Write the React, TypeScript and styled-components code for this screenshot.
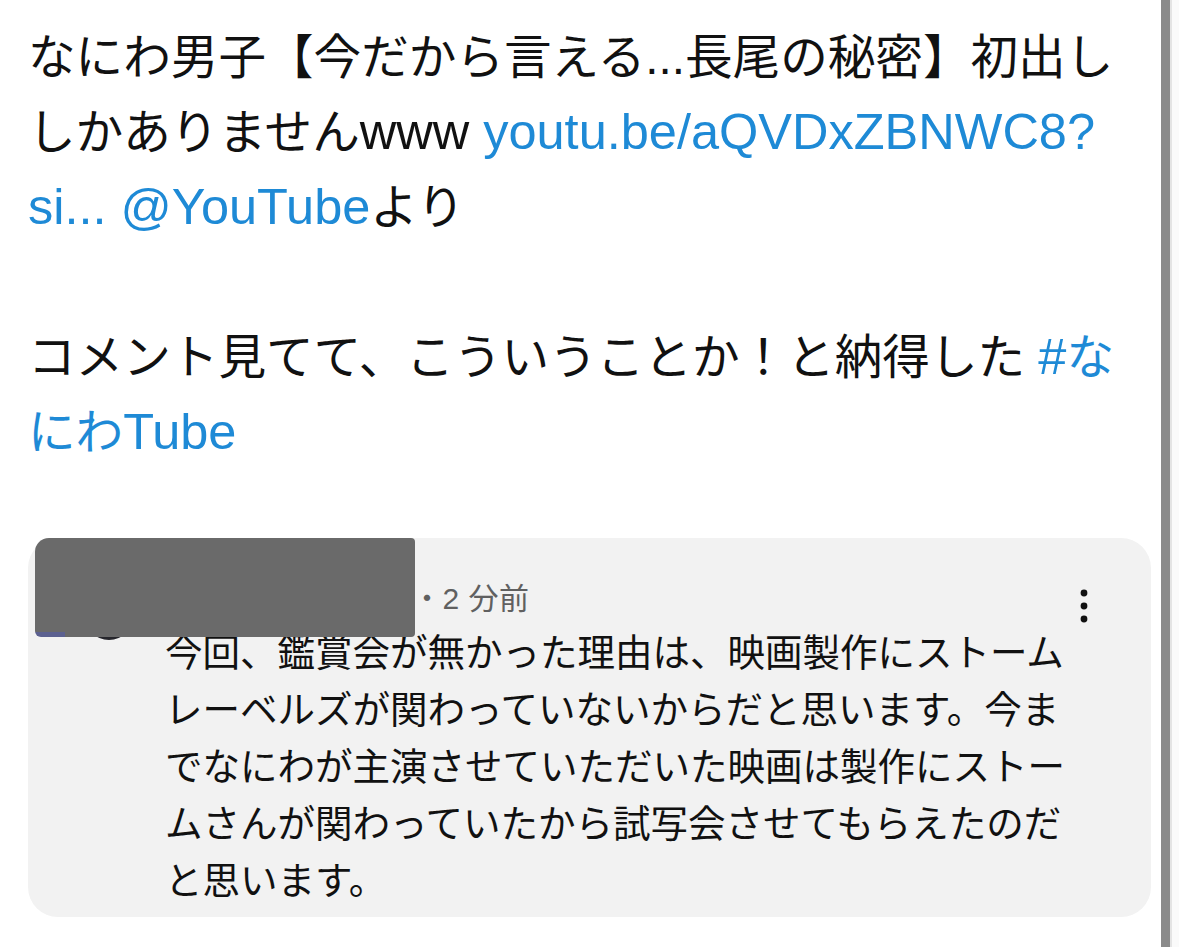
import styled, { createGlobalStyle } from 'styled-components';

const GlobalStyle = createGlobalStyle`
  html, body {
    margin: 0;
    padding: 0;
    background: #ffffff;
  }
  body {
    font-family: 'Liberation Sans', 'Noto Sans CJK JP', sans-serif;
  }
`;

const commentLines = [
  '今回、鑑賞会が無かった理由は、映画製作にストーム',
  'レーベルズが関わっていないからだと思います。今ま',
  'でなにわが主演させていただいた映画は製作にストー',
  'ムさんが関わっていたから試写会させてもらえたのだ',
  'と思います。',
];

function App() {
  return (
    <>
      <GlobalStyle />
      <Screen>
        <Content>
          <TweetText>
            なにわ男子【今だから言える...長尾の秘密】初出し
            <br />
            しかありません<Latin>www </Latin>
            <Link>
              <Latin>youtu.be/aQVDxZBNWC8?</Latin>
            </Link>
            <br />
            <Link>
              <Latin>si...</Latin>
            </Link>
            <Latin> </Latin>
            <Link>
              <Latin>@YouTube</Latin>
            </Link>
            より
            <br />
            <br />
            コメント見てて、こういうことか！と納得した{' '}
            <Link>
              <Latin>#</Latin>な
            </Link>
            <br />
            <Link>
              にわ<Latin>Tube</Latin>
            </Link>
          </TweetText>

          <CommentCard>
            <Avatar />
            <Redacted />
            <CommentHeader>
              <Meta>・2 分前</Meta>
              <MenuButton aria-label='menu'>
                <svg width='8' height='34' viewBox='0 0 8 34'>
                  <circle cx='4' cy='4' r='3.4' fill='#111' />
                  <circle cx='4' cy='17' r='3.4' fill='#111' />
                  <circle cx='4' cy='30' r='3.4' fill='#111' />
                </svg>
              </MenuButton>
            </CommentHeader>
            <CommentBody>
              {commentLines.map((line) => (
                <CommentLine key={line}>{line}</CommentLine>
              ))}
            </CommentBody>
          </CommentCard>
        </Content>
        <Edge />
        <Gutter />
      </Screen>
    </>
  );
}

const Screen = styled.div`
  display: flex;
  width: 1179px;
  height: 947px;
  overflow: hidden;
  background: #ffffff;
`;

const Content = styled.div`
  width: 1161px;
  flex-shrink: 0;
  padding-top: 20px;
  box-sizing: border-box;
`;

const Edge = styled.div`
  width: 9px;
  flex-shrink: 0;
  background: #8a8a8a;
`;

const Gutter = styled.div`
  flex: 1;
  background: #fafafa;
  border-left: 2px solid #e4e4e4;
`;

const TweetText = styled.div`
  padding-left: 28px;
  font-size: 47.6px;
  line-height: 75px;
  color: #111111;
  white-space: nowrap;
`;

const Latin = styled.span`
  font-size: 50.5px;
  line-height: 1;
`;

const Link = styled.span`
  color: #1e8ad6;
`;

const CommentCard = styled.div`
  position: relative;
  margin: 68px 0 0 28px;
  width: 1123px;
  height: 379px;
  box-sizing: border-box;
  background: #f2f2f2;
  border-radius: 30px;
  padding-top: 38px;
`;

const Avatar = styled.div`
  position: absolute;
  left: 56px;
  top: 52px;
  width: 50px;
  height: 50px;
  border-radius: 50%;
  background: #26262c;
`;

const Redacted = styled.div`
  position: absolute;
  left: 7px;
  top: 0;
  width: 380px;
  height: 99px;
  border-radius: 14px 4px 4px 6px;
  background:
    linear-gradient(to top, #5c6190 0 5px, transparent 5px) no-repeat left bottom / 30px 100%,
    #6a6a6a;
`;

const CommentHeader = styled.div`
  display: flex;
  align-items: center;
  height: 40px;
  padding-left: 384px;
  padding-right: 63px;
`;

const Meta = styled.span`
  flex: 1;
  font-size: 30px;
  color: #606060;
  letter-spacing: 0.5px;
`;

const MenuButton = styled.div`
  display: flex;
  align-items: center;
  margin-top: 20px;
`;

const CommentBody = styled.div`
  padding: 9px 0 0 137px;
`;

const CommentLine = styled.div`
  font-size: 37.5px;
  line-height: 57px;
  color: #111111;
  white-space: nowrap;
`;

export default App;
